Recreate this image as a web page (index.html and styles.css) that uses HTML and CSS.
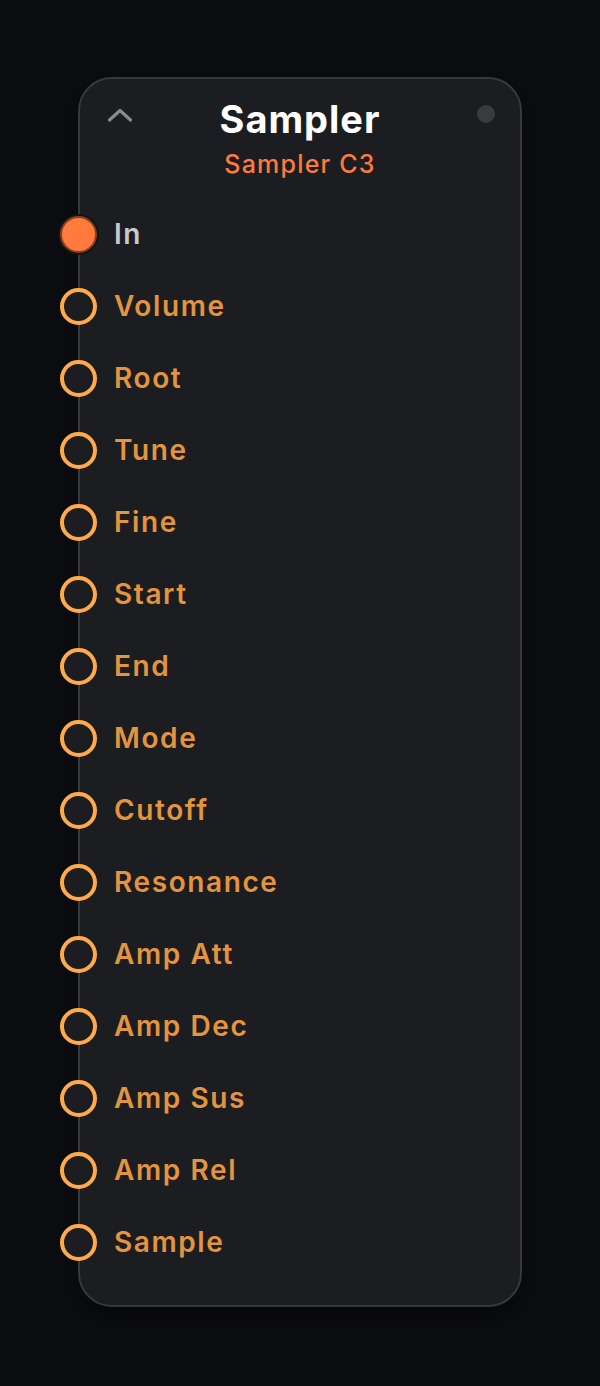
FILE: index.html
```html
<!DOCTYPE html>
<html>
<head>
<meta charset="utf-8">
<link rel="stylesheet" href="styles.css">
</head>
<body>
<div class="card">
  <div class="header">
    <svg class="chevron" width="26" height="16" viewBox="0 0 26 16"><polyline points="2.5,13 13,3.5 23.5,13" fill="none" stroke="#8a8b8f" stroke-width="3.2" stroke-linecap="round" stroke-linejoin="round"/></svg>
    <div class="titles">
      <div class="title">Sampler</div>
      <div class="subtitle">Sampler C3</div>
    </div>
    <span class="dot"></span>
  </div>
  <div class="ports">
    <div class="row"><span class="port filled"></span><span class="label in">In</span></div>
    <div class="row"><span class="port"></span><span class="label">Volume</span></div>
    <div class="row"><span class="port"></span><span class="label">Root</span></div>
    <div class="row"><span class="port"></span><span class="label">Tune</span></div>
    <div class="row"><span class="port"></span><span class="label">Fine</span></div>
    <div class="row"><span class="port"></span><span class="label">Start</span></div>
    <div class="row"><span class="port"></span><span class="label">End</span></div>
    <div class="row"><span class="port"></span><span class="label">Mode</span></div>
    <div class="row"><span class="port"></span><span class="label">Cutoff</span></div>
    <div class="row"><span class="port"></span><span class="label">Resonance</span></div>
    <div class="row"><span class="port"></span><span class="label">Amp Att</span></div>
    <div class="row"><span class="port"></span><span class="label">Amp Dec</span></div>
    <div class="row"><span class="port"></span><span class="label">Amp Sus</span></div>
    <div class="row"><span class="port"></span><span class="label">Amp Rel</span></div>
    <div class="row"><span class="port"></span><span class="label">Sample</span></div>
  </div>
</div>
</body>
</html>
```
FILE: styles.css
```css
html, body {
  margin: 0;
  padding: 0;
  background: #0c0d10;
  height: 100%;
}
body {
  font-family: Inter, "Noto Sans", sans-serif;
  display: flex;
  flex-direction: column;
  align-items: center;
  padding-top: 77px;
  box-sizing: border-box;
}
.card {
  width: 444px;
  height: 1230px;
  box-sizing: border-box;
  background: #1c1d21;
  border: 2px solid #38393c;
  border-radius: 34px;
  box-shadow: 0 8px 24px rgba(0,0,0,0.5);
  padding: 17px 0 27px 0;
}
.header {
  display: grid;
  grid-template-columns: 1fr auto 1fr;
  align-items: start;
  padding: 0 25px 0 25px;
}
.chevron {
  margin-top: 11px;
  margin-left: 2px;
  justify-self: start;
}
.dot {
  justify-self: end;
  margin-top: 9px;
  width: 18px;
  height: 18px;
  border-radius: 50%;
  background: #3a3b3f;
}
.titles {
  text-align: center;
}
.title {
  color: #ffffff;
  font-size: 38px;
  font-weight: 700;
  line-height: 46px;
  letter-spacing: 1px;
}
.subtitle {
  color: #ff7a3d;
  font-size: 25px;
  font-weight: 500;
  line-height: 30px;
  margin-top: 7px;
  letter-spacing: 1.2px;
}
.ports {
  margin-top: 19px;
  margin-left: -20px;
}
.row {
  height: 72px;
  display: flex;
  align-items: center;
}
.port {
  width: 37px;
  height: 37px;
  box-sizing: border-box;
  border: 4px solid #ffaa47;
  border-radius: 50%;
  background: #1c1d21;
  flex: none;
}
.port.filled {
  background: #ff7a3d;
  border: 2px solid #8a3e1c;
  box-shadow: 0 0 0 2px #141416;
}
.label {
  margin-left: 17px;
  color: #e3943f;
  font-size: 28px;
  font-weight: 600;
  letter-spacing: 1.6px;
}
.label.in {
  color: #c9c9cd;
}
```
